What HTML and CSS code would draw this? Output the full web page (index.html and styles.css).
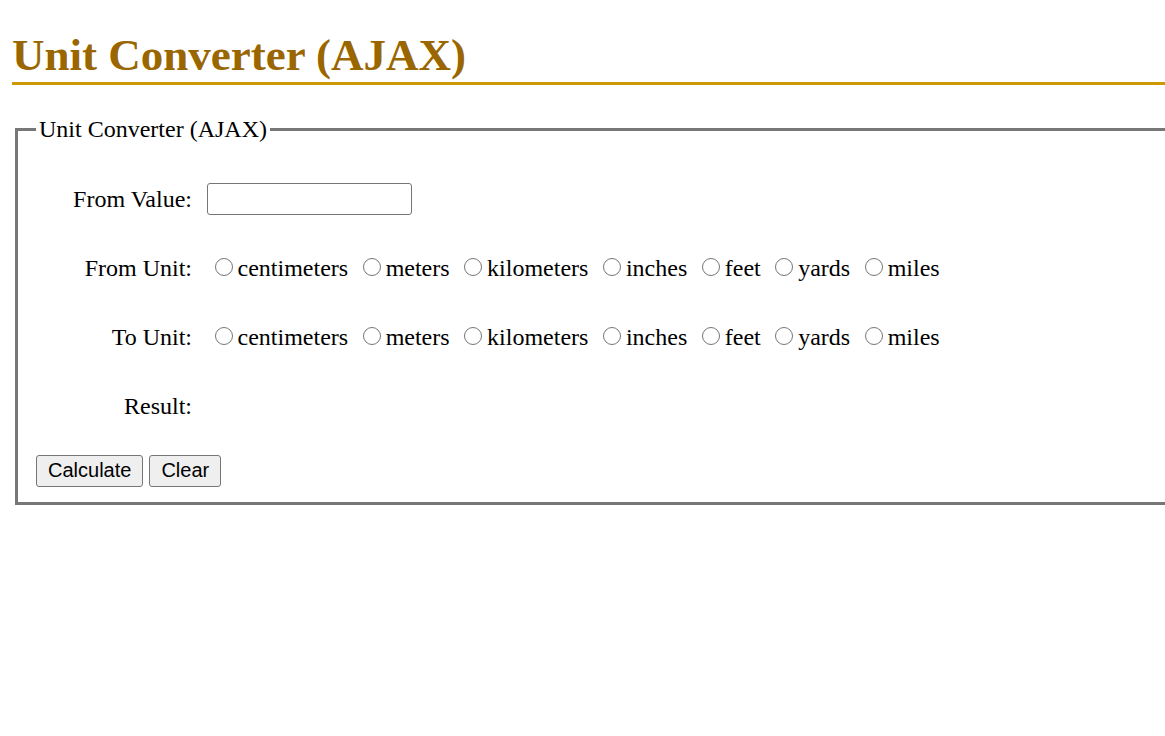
FILE: index.html
```html
<!DOCTYPE html>
<html lang="en">
<head>
<meta charset="utf-8">
<title>Unit Converter (AJAX)</title>
<link rel="stylesheet" href="styles.css">
</head>
<body>
<h1 class="title">Unit Converter (AJAX)</h1>
<form class="converter">
  <fieldset class="panel">
    <legend class="panel-legend">Unit Converter (AJAX)</legend>
    <div class="grid">
      <div class="label">From Value:</div>
      <div class="field"><input class="text-input" type="text" name="fromValue"></div>

      <div class="label">From Unit:</div>
      <div class="field">
        <label class="opt"><input class="radio" type="radio" name="from" value="cm">centimeters</label>
        <label class="opt"><input class="radio" type="radio" name="from" value="m">meters</label>
        <label class="opt"><input class="radio" type="radio" name="from" value="km">kilometers</label>
        <label class="opt"><input class="radio" type="radio" name="from" value="in">inches</label>
        <label class="opt"><input class="radio" type="radio" name="from" value="ft">feet</label>
        <label class="opt"><input class="radio" type="radio" name="from" value="yd">yards</label>
        <label class="opt"><input class="radio" type="radio" name="from" value="mi">miles</label>
      </div>

      <div class="label">To Unit:</div>
      <div class="field">
        <label class="opt"><input class="radio" type="radio" name="to" value="cm">centimeters</label>
        <label class="opt"><input class="radio" type="radio" name="to" value="m">meters</label>
        <label class="opt"><input class="radio" type="radio" name="to" value="km">kilometers</label>
        <label class="opt"><input class="radio" type="radio" name="to" value="in">inches</label>
        <label class="opt"><input class="radio" type="radio" name="to" value="ft">feet</label>
        <label class="opt"><input class="radio" type="radio" name="to" value="yd">yards</label>
        <label class="opt"><input class="radio" type="radio" name="to" value="mi">miles</label>
      </div>

      <div class="label">Result:</div>
      <div class="field"></div>
    </div>
    <div class="actions">
      <button class="btn" type="button">Calculate</button>
      <button class="btn" type="reset">Clear</button>
    </div>
  </fieldset>
</form>
</body>
</html>
```
FILE: styles.css
```css
html {
  overflow: hidden;
}
body {
  margin: 0 0 0 12px;
  width: 1200px;
  font-family: "Liberation Serif", "Times New Roman", serif;
  font-size: 24px;
  color: #000;
  background: #fff;
}
.title {
  margin: 28px 0 0 0;
  font-size: 45px;
  line-height: 54px;
  font-weight: bold;
  color: #996600;
  border-bottom: 3px solid #cc9900;
}
.converter {
  margin: 30px 0 0 3px;
}
.panel {
  margin: 0;
  padding: 21px 18px 15px 18px;
  border: 3px solid #777;
  border-right: none;
}
.panel-legend {
  padding: 0 3px;
  line-height: 28px;
  font-size: 24px;
}
.grid {
  display: grid;
  grid-template-columns: 156px 1fr;
  grid-auto-rows: 69px;
  column-gap: 15px;
  align-items: center;
}
.label {
  text-align: right;
  line-height: 28px;
}
.field {
  line-height: 28px;
  white-space: nowrap;
}
.text-input {
  box-sizing: border-box;
  width: 205px;
  height: 32px;
  margin: 1px 0 0 0;
  padding: 1px 3px;
  border: 1.5px solid #767676;
  border-radius: 3px;
  font-size: 20px;
  vertical-align: middle;
}
.opt {
  display: inline;
}
.radio {
  appearance: none;
  -webkit-appearance: none;
  box-sizing: border-box;
  width: 18px;
  height: 18px;
  margin: 0 5px 0 8.5px;
  border: 1.5px solid #767676;
  border-radius: 50%;
  background: #fff;
  vertical-align: 0;
}
.opt:first-child .radio {
  margin-left: 7.5px;
}
.actions {
  display: flex;
  gap: 6px;
  margin-top: 14.5px;
}
.btn {
  box-sizing: border-box;
  height: 32px;
  margin: 0;
  padding: 1px 11px;
  font-family: "Liberation Sans", Arial, sans-serif;
  font-size: 20px;
  color: #000;
  background: #efefef;
  border: 1.5px solid #767676;
  border-radius: 3px;
}
```
